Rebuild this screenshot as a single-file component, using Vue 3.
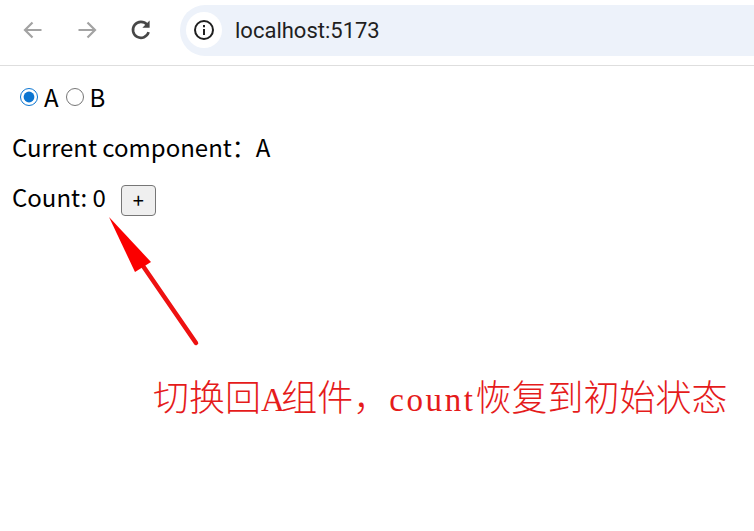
<script setup>
import { ref } from 'vue'

const current = ref('A')
const count = ref(0)
</script>

<template>
  <div class="page">
    <header class="toolbar">
      <button class="nav">
        <svg width="24" height="24" viewBox="0 0 24 24" fill="none" stroke="#a3a3a3" stroke-width="2.2">
          <path d="M20.5 12H4M11.5 4.5L4 12l7.5 7.5" />
        </svg>
      </button>
      <button class="nav">
        <svg width="24" height="24" viewBox="0 0 24 24" fill="none" stroke="#a3a3a3" stroke-width="2.2">
          <path d="M3.5 12H20M12.5 4.5L20 12l-7.5 7.5" />
        </svg>
      </button>
      <button class="nav">
        <svg width="24" height="24" viewBox="0 0 24 24" fill="none" stroke="#474747" stroke-width="2.6">
          <path d="M19.6 14.2A8 8 0 1 1 18 6.6" />
          <path d="M20.6 2.6v7.2h-7.2z" fill="#474747" stroke="none" />
        </svg>
      </button>
      <div class="address">
        <span class="info">
          <svg width="22" height="22" viewBox="0 0 22 22" fill="none" stroke="#1f1f1f" stroke-width="2">
            <circle cx="11" cy="11" r="9" />
            <path d="M11 10v6M11 6v2.2" />
          </svg>
        </span>
        <span class="url">localhost:5173</span>
      </div>
    </header>

    <main class="content">
      <div class="row radios">
        <input id="a" v-model="current" type="radio" value="A" />
        <label for="a">A</label>
        <input id="b" v-model="current" type="radio" value="B" />
        <label for="b">B</label>
      </div>
      <p class="row">Current component：{{ current }}</p>
      <div class="row counter">
        <span>Count: {{ count }}</span>
        <button class="plus" @click="count++">+</button>
      </div>
    </main>

    <svg class="arrow" width="754" height="531" viewBox="0 0 754 531">
      <path d="M196 343L143 266" stroke="#ee1111" stroke-width="4.5" stroke-linecap="round" fill="none" />
      <path d="M109 217L151 262L143 267L135 272z" fill="#fb0000" />
    </svg>
    <div class="note">切换回<span class="latin a">A</span>组件，<span class="latin">count</span>恢复到初始状态</div>
  </div>
</template>

<style>
html, body {
  margin: 0;
  background: #fff;
}
</style>

<style scoped>
.page {
  position: relative;
  width: 754px;
  height: 531px;
  overflow: hidden;
  font-family: "Noto Sans CJK SC", "Noto Sans", sans-serif;
  color: #000;
}
.toolbar {
  display: flex;
  align-items: center;
  height: 66px;
  box-sizing: border-box;
  padding: 5px 0 10px 11px;
  border-bottom: 1px solid #dedede;
}
.nav {
  width: 44px;
  height: 44px;
  margin-right: 10px;
  padding: 0;
  border: 0;
  background: none;
  display: flex;
  align-items: center;
  justify-content: center;
}
.address {
  flex: 1;
  height: 51px;
  margin-left: 7px;
  padding-left: 6px;
  display: flex;
  align-items: center;
  gap: 13px;
  background: #edf2fa;
  border-radius: 25px 0 0 25px;
}
.info {
  width: 36px;
  height: 36px;
  border-radius: 50%;
  background: #fff;
  display: flex;
  align-items: center;
  justify-content: center;
}
.url {
  font-family: "Roboto", sans-serif;
  font-size: 22px;
  color: #1f1f1f;
}
.content {
  padding: 14px 12px 0;
  font-size: 24px;
}
.row {
  margin: 0 0 17px;
  height: 33px;
  line-height: 33px;
}
.radios {
  display: flex;
  align-items: center;
}
.radios input {
  width: 18px;
  height: 18px;
  margin: 0 6px 0 8px;
  accent-color: #0b75d1;
}
.radios label + input {
  margin-left: 7px;
  margin-right: 6px;
}
.counter {
  display: flex;
  align-items: center;
  gap: 15px;
}
.plus {
  width: 35px;
  height: 31px;
  margin-top: 7px;
  padding: 0;
  font-family: "Noto Sans CJK SC", sans-serif;
  font-size: 20px;
  line-height: 1;
  color: #000;
  background: #efefef;
  border: 1px solid #767676;
  border-radius: 4px;
}
.arrow {
  position: absolute;
  left: 0;
  top: 0;
  pointer-events: none;
}
.note {
  position: absolute;
  left: 153px;
  top: 369px;
  font-family: "Noto Sans CJK SC", sans-serif;
  font-size: 36px;
  font-weight: 300;
  line-height: 52px;
  white-space: nowrap;
  color: #e51b1b;
}
.latin {
  font-family: "Liberation Serif", serif;
  font-size: 33px;
  letter-spacing: 2.6px;
}
.latin.a {
  letter-spacing: -3.6px;
}
</style>
